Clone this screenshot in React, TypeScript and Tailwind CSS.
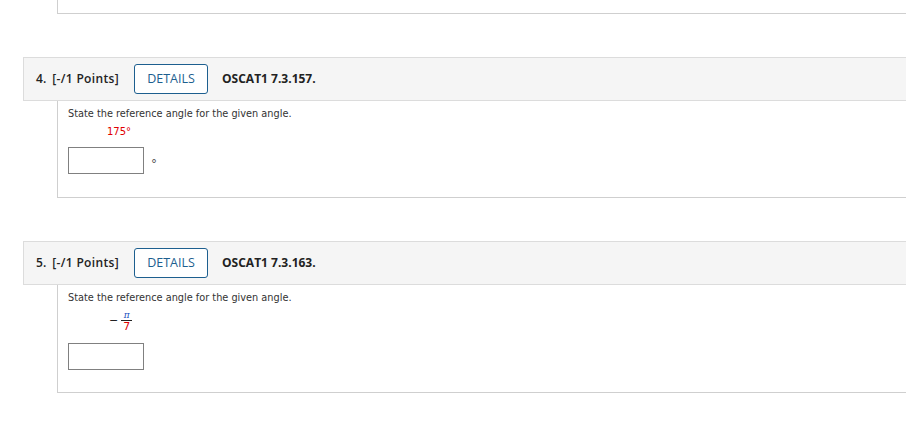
const sans = "font-['Open_Sans',sans-serif]";
const verd = "font-['DejaVu_Sans',Verdana,sans-serif]";

function Header({ n, code }: { n: number; code: string }) {
  return (
    <div className={`flex h-[44px] items-center border-y border-l border-[#dcdcdc] bg-[#f5f5f5] pl-[12px] text-[12px] text-[#222] ${sans}`}>
      <span className="font-semibold">{n}.</span>
      <span className="ml-[6px] font-semibold tracking-[0.35px]">[-/1 Points]</span>
      <button className="ml-[15px] h-[30px] w-[74px] rounded-[3px] border border-[#1d5f8f] bg-white text-[12.5px] text-[#1d5f8f]">DETAILS</button>
      <span className="ml-[14px] font-bold">{code}</span>
    </div>
  );
}

export default function App() {
  return (
    <div className="min-h-[431px] bg-white pl-[23px]">
      <div className="ml-[34px] h-[14px] border-b border-l border-[#cfcfcf]" />
      <div className="mt-[43px]">
        <Header n={4} code="OSCAT1 7.3.157." />
        <div className={`ml-[34px] h-[97px] border-b border-l border-[#cfcfcf] pl-[10px] pt-[6px] text-[9.75px] text-[#333] ${verd}`}>
          <p className="leading-[13px]">State the reference angle for the given angle.</p>
          <p className="mt-[5px] pl-[39px] text-[10px] leading-[14px] text-[#e00000]">175°</p>
          <div className="mt-[8px] flex items-center">
            <div className="h-[27px] w-[76px] border border-[#808080] bg-white" />
            <span className="ml-[7px] pt-[6px] text-[12px] text-[#555]">°</span>
          </div>
        </div>
      </div>
      <div className="mt-[43px]">
        <Header n={5} code="OSCAT1 7.3.163." />
        <div className={`ml-[34px] h-[108px] border-b border-l border-[#cfcfcf] pl-[10px] pt-[6px] text-[9.75px] text-[#333] ${verd}`}>
          <p className="leading-[13px]">State the reference angle for the given angle.</p>
          <div className="mt-[6px] flex items-center pl-[41px]">
            <span className="mr-[3px] text-[11px] text-[#222]">−</span>
            <span className="inline-flex flex-col items-center leading-[10px]">
              <span className="px-[2px] font-['DejaVu_Serif',serif] text-[9px] italic text-[#2050c0]">π</span>
              <span className="w-[11px] border-t border-[#222]" />
              <span className="text-[11px] leading-[11px] text-[#e00000]">7</span>
            </span>
          </div>
          <div className="mt-[11px] h-[27px] w-[76px] border border-[#808080] bg-white" />
        </div>
      </div>
    </div>
  );
}
